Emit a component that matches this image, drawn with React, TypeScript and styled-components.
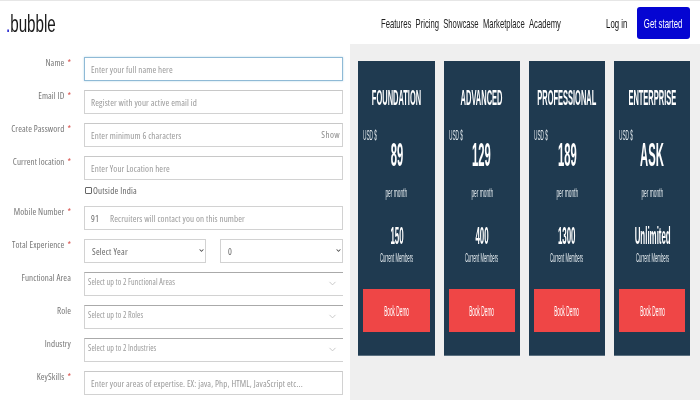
import React from 'react'
import styled, { createGlobalStyle } from 'styled-components'
import { FiChevronDown } from 'react-icons/fi'
import { FaChevronDown } from 'react-icons/fa'

const GlobalStyle = createGlobalStyle`
  html, body {
    margin: 0;
    padding: 0;
    background: #fff;
    overflow: hidden;
  }
  * { box-sizing: border-box; }
`

const Page = styled.div`
  width: 700px;
  height: 400px;
  overflow: hidden;
  display: flex;
  flex-direction: column;
  border-top: 1px solid #e6e6e6;
  filter: blur(0.45px);
  will-change: transform;
  font-family: "Open Sans", sans-serif;
`

const Header = styled.header`
  height: 43px;
  flex: none;
  display: flex;
  align-items: center;
  padding: 0 10px 0 6px;
`

const Logo = styled.div`
  width: 60px;
  margin-top: 3px;
  font-family: "Liberation Sans", sans-serif;
  font-size: 23px;
  color: #1a1a1a;
  b { color: #0505c8; font-weight: 400; }
`

const Squeeze = styled.span<{ $x: number; $origin?: string }>`
  display: inline-block;
  white-space: nowrap;
  transform: scaleX(${(p) => p.$x});
  transform-origin: ${(p) => p.$origin || 'center'};
`

const Nav = styled.nav`
  margin-left: auto;
  width: 225px;
  display: flex;
  margin-top: 2px;
  font-family: "Liberation Sans", sans-serif;
  font-size: 13px;
  color: #222;
`

const HeaderActions = styled.div`
  display: flex;
  align-items: center;
  gap: 10px;
  font-family: "Liberation Sans", sans-serif;
  font-size: 13px;
`

const LogIn = styled.a`
  width: 21px;
  display: flex;
  justify-content: center;
  padding-top: 2px;
  color: #111;
`

const GetStarted = styled.a`
  width: 53px;
  height: 32px;
  border-radius: 3px;
  background: #0505d2;
  color: #fff;
  display: flex;
  align-items: center;
  justify-content: center;
  padding-top: 2px;
`

const Main = styled.main`
  flex: 1;
  display: grid;
  grid-template-columns: 350px 350px;
  min-height: 0;
`

const FormPanel = styled.form`
  padding: 13px 7px 0 0;
  display: grid;
  grid-template-columns: 71px minmax(0, 1fr);
  column-gap: 13px;
  row-gap: 9px;
  align-content: start;
  font-stretch: 75%;
`

const Label = styled.label`
  display: flex;
  justify-content: flex-end;
  white-space: nowrap;
  font-size: 9px;
  letter-spacing: 0.1px;
  line-height: 11px;
  color: #777;
  em { color: #d9534f; font-style: normal; margin-left: 3px; }
`

const Field = styled.div`
  position: relative;
  display: flex;
  flex-direction: column;
  gap: 4px;
`

const Input = styled.input<{ $focused?: boolean }>`
  width: 100%;
  height: 24px;
  border: 1px solid ${(p) => (p.$focused ? '#8fbad6' : '#d2d2d2')};
  border-top-color: ${(p) => (p.$focused ? '#8fbad6' : '#c8c8c8')};
  box-shadow: ${(p) => (p.$focused ? '0 0 2px #b9d8ea' : 'none')};
  border-radius: 0;
  outline: none;
  padding: 0 0 0 6px;
  font-family: "Open Sans", sans-serif;
  font-stretch: 75%;
  font-size: 9px;
  letter-spacing: 0.12px;
  color: #666;
  background: transparent;
  &::placeholder { color: #999; opacity: 1; }
`

const PhoneBox = styled.div`
  height: 24px;
  border: 1px solid #d2d2d2;
  display: flex;
  align-items: center;
  padding-left: 6px;
  font-size: 9px;
  letter-spacing: 0.12px;
  color: #999;
  span { width: 19px; color: #666; }
`

const ShowLink = styled.span`
  position: absolute;
  right: 3px;
  top: 5px;
  font-size: 9px;
  letter-spacing: 0.4px;
  color: #888;
`

const OutsideRow = styled.div`
  display: flex;
  align-items: center;
  height: 13px;
  font-size: 9px;
  letter-spacing: 0.2px;
  color: #666;
  input {
    appearance: none;
    width: 7px;
    height: 7px;
    margin: 0 1px 0 1px;
    border: 1px solid #666;
    border-radius: 1px;
  }
`

const SelectPair = styled.div`
  display: grid;
  grid-template-columns: 122px 123px;
  column-gap: 14px;
`

const SelectWrap = styled.div`
  position: relative;
  height: 24px;
  svg {
    position: absolute;
    right: 2px;
    top: 9px;
    width: 5px;
    height: 5px;
    color: #444;
  }
`

const NativeSelect = styled.select`
  appearance: none;
  display: block;
  width: 100%;
  height: 24px;
  border: 1px solid #d2d2d2;
  border-radius: 0;
  background: transparent;
  padding-left: 7px;
  font-family: "Open Sans", sans-serif;
  font-stretch: 75%;
  font-size: 9px;
  letter-spacing: 0.2px;
  color: #666;
  outline: none;
`

const MultiSelect = styled.div`
  height: 24px;
  border: 1px solid #d2d2d2;
  border-top-color: #aaa;
  border-right: none;
  padding: 3px 0 0 3px;
  position: relative;
  font-size: 8px;
  letter-spacing: 0.1px;
  line-height: 11px;
  color: #999;
  svg {
    position: absolute;
    right: 5px;
    top: 5px;
    width: 11px;
    height: 11px;
    color: #c4c4c4;
  }
`

const PricingPanel = styled.section`
  background: #efefef;
  padding: 17px 9.6px 0 8.4px;
  display: grid;
  grid-template-columns: repeat(4, minmax(0, 1fr));
  column-gap: 8.75px;
  align-content: start;
`

const Card = styled.article`
  height: 295px;
  background: #1f3a50;
  border-bottom: 1px solid #5b7080;
  color: #fff;
  display: flex;
  flex-direction: column;
  align-items: center;
  padding: 0 5px;
  font-family: "Liberation Sans", sans-serif;
`

const Title = styled.h3`
  margin: 24px 0 0;
  height: 25px;
  line-height: 25px;
  font-size: 22px;
  font-weight: 700;
`

const Currency = styled.div`
  align-self: flex-start;
  margin: 19px 0 0;
  height: 12px;
  line-height: 12px;
  font-size: 14px;
  color: #dfe6ea;
`

const Price = styled.div`
  margin-top: 0;
  height: 26px;
  line-height: 26px;
  font-size: 34px;
  font-weight: 700;
`

const PerMonth = styled.div`
  margin-top: 20px;
  height: 12px;
  line-height: 12px;
  font-size: 13px;
  color: #dfe6ea;
`

const Count = styled.div`
  margin-top: 25px;
  height: 24px;
  line-height: 24px;
  font-size: 24px;
  font-weight: 700;
`

const Members = styled.div`
  margin-top: 4px;
  height: 12px;
  line-height: 12px;
  font-size: 13px;
  color: #dfe6ea;
`

const BookDemo = styled.button`
  margin-top: 25px;
  width: 100%;
  height: 43px;
  flex: none;
  border: none;
  background: #ef4646;
  color: #fff;
  font-family: "Liberation Sans", sans-serif;
  font-size: 14px;
  padding: 0;
  display: flex;
  align-items: center;
  justify-content: center;
`

const plans = [
  { name: 'FOUNDATION', price: '89', members: '150' },
  { name: 'ADVANCED', price: '129', members: '400' },
  { name: 'PROFESSIONAL', price: '189', members: '1300' },
  { name: 'ENTERPRISE', price: 'ASK', members: 'Unlimited' },
]

const App = () => {
  return (
    <Page>
      <GlobalStyle />
      <Header>
        <Logo><Squeeze $x={0.66} $origin="left"><b>.</b>bubble</Squeeze></Logo>
        <Nav>
          <Squeeze $x={0.59} $origin="left">Features&nbsp;&nbsp;Pricing&nbsp;&nbsp;Showcase&nbsp;&nbsp;Marketplace&nbsp;&nbsp;Academy</Squeeze>
        </Nav>
        <HeaderActions>
          <LogIn><Squeeze $x={0.6}>Log in</Squeeze></LogIn>
          <GetStarted><Squeeze $x={0.6}>Get started</Squeeze></GetStarted>
        </HeaderActions>
      </Header>
      <Main>
        <FormPanel>
          <Label>Name<em>*</em></Label>
          <Field><Input $focused placeholder="Enter your full name here" /></Field>

          <Label>Email ID<em>*</em></Label>
          <Field><Input placeholder="Register with your active email id" /></Field>

          <Label>Create Password<em>*</em></Label>
          <Field>
            <Input placeholder="Enter minimum 6 characters" />
            <ShowLink>Show</ShowLink>
          </Field>

          <Label>Current location<em>*</em></Label>
          <Field>
            <Input placeholder="Enter Your Location here" />
            <OutsideRow><input type="checkbox" />Outside India</OutsideRow>
          </Field>

          <Label>Mobile Number<em>*</em></Label>
          <Field><PhoneBox><span>91</span>Recruiters will contact you on this number</PhoneBox></Field>

          <Label>Total Experience<em>*</em></Label>
          <SelectPair>
            <SelectWrap><NativeSelect><option>Select Year</option></NativeSelect><FaChevronDown /></SelectWrap>
            <SelectWrap><NativeSelect><option>0</option></NativeSelect><FaChevronDown /></SelectWrap>
          </SelectPair>

          <Label>Functional Area</Label>
          <MultiSelect>Select up to 2 Functional Areas<FiChevronDown /></MultiSelect>

          <Label>Role</Label>
          <MultiSelect>Select up to 2 Roles<FiChevronDown /></MultiSelect>

          <Label>Industry</Label>
          <MultiSelect>Select up to 2 Industries<FiChevronDown /></MultiSelect>

          <Label>KeySkills<em>*</em></Label>
          <Field><Input placeholder="Enter your areas of expertise. EX: java, Php, HTML, JavaScript etc..." /></Field>
        </FormPanel>
        <PricingPanel>
          {plans.map((plan) => (
            <Card key={plan.name}>
              <Title><Squeeze $x={0.34}>{plan.name}</Squeeze></Title>
              <Currency><Squeeze $x={0.34} $origin="left">USD $</Squeeze></Currency>
              <Price><Squeeze $x={0.33}>{plan.price}</Squeeze></Price>
              <PerMonth><Squeeze $x={0.37}>per month</Squeeze></PerMonth>
              <Count><Squeeze $x={0.33}>{plan.members}</Squeeze></Count>
              <Members><Squeeze $x={0.33}>Current Members</Squeeze></Members>
              <BookDemo><Squeeze $x={0.34}>Book Demo</Squeeze></BookDemo>
            </Card>
          ))}
        </PricingPanel>
      </Main>
    </Page>
  )
}

export default App
